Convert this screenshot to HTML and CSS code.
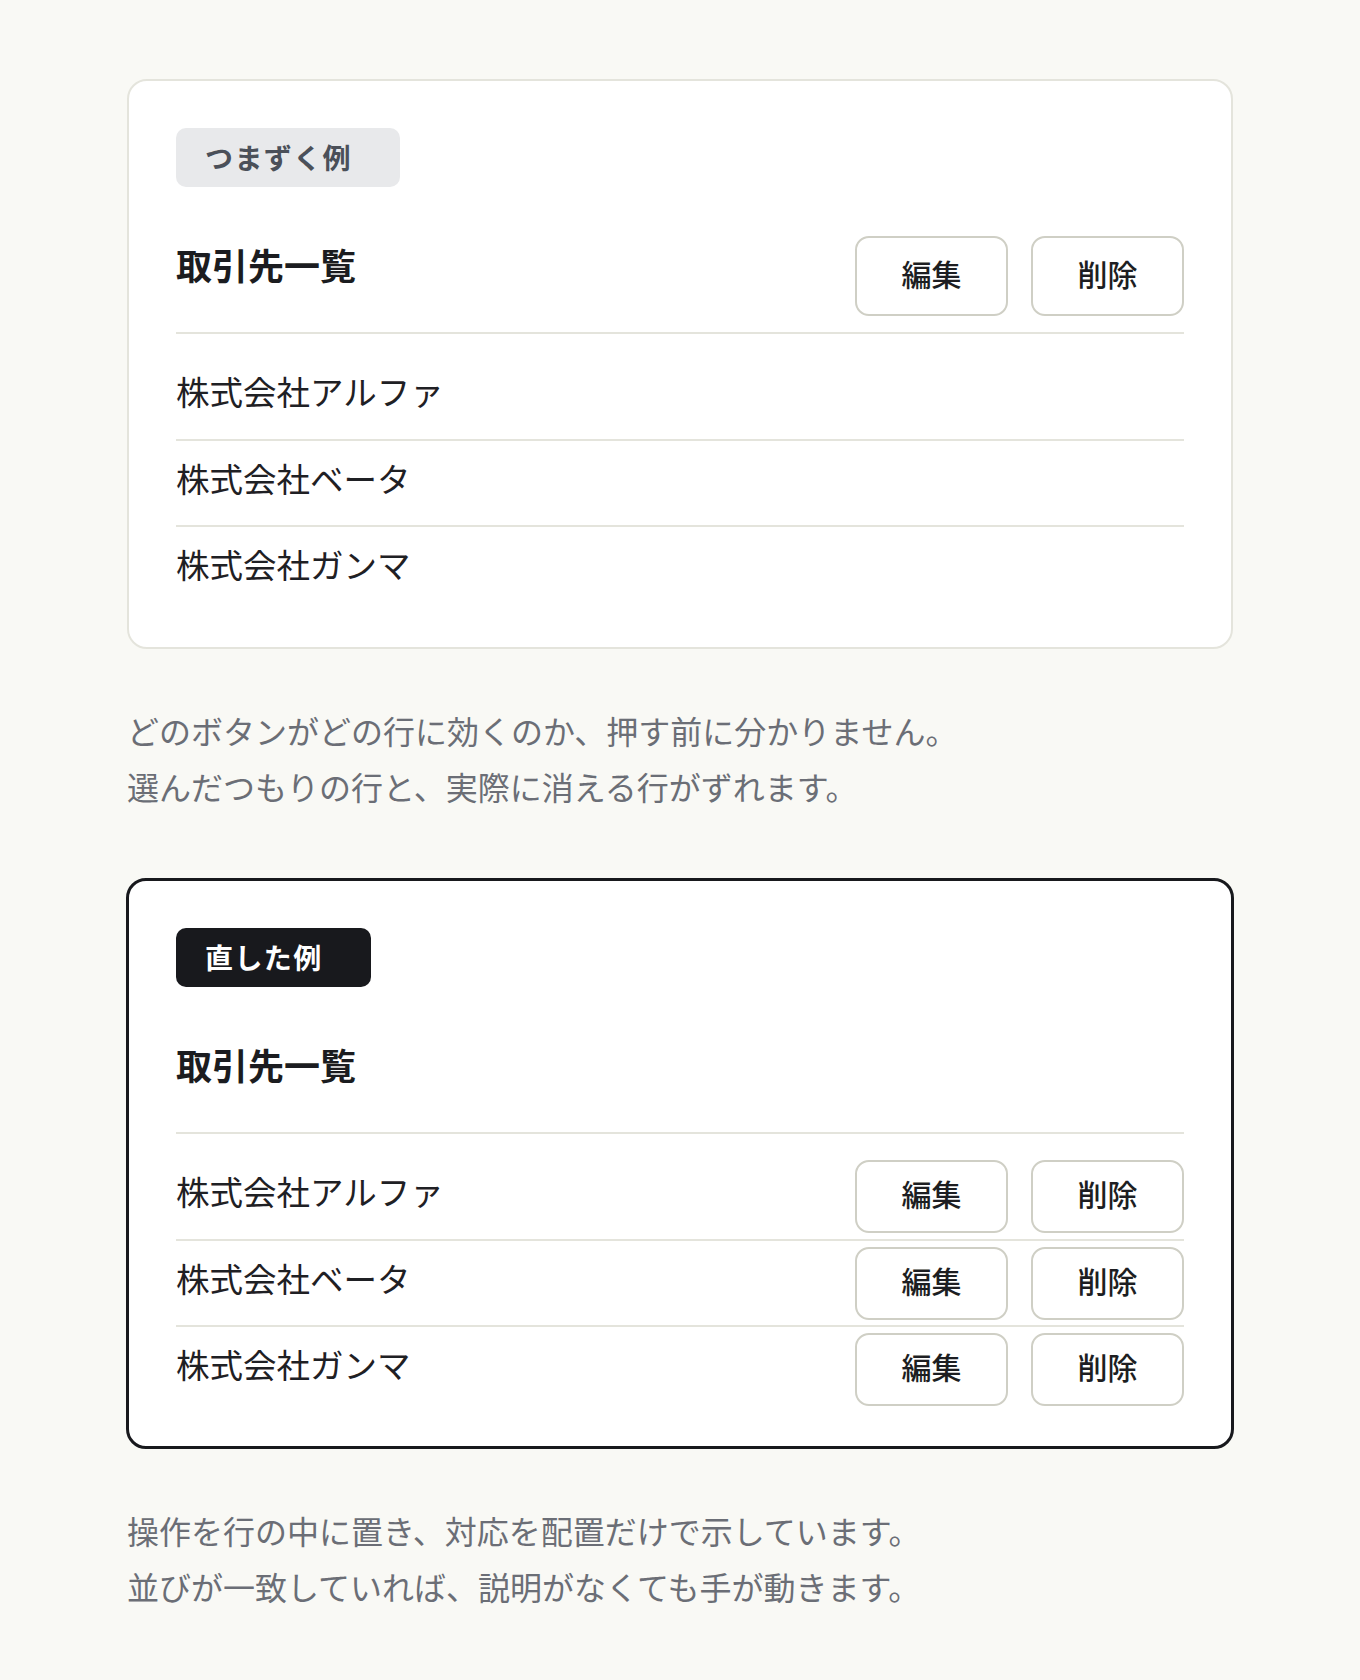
FILE: index.html
```html
<!DOCTYPE html>
<html lang="ja">
<head>
<meta charset="utf-8">
<title>取引先一覧 — ボタンの置き場所</title>
<link rel="stylesheet" href="styles.css">
</head>
<body>
<main class="page">

  <section class="card">
    <span class="badge badge-muted">つまずく例</span>
    <header class="list-head">
      <h2 class="list-title">取引先一覧</h2>
      <div class="actions">
        <button class="btn btn-tall" type="button">編集</button>
        <button class="btn btn-tall" type="button">削除</button>
      </div>
    </header>
    <ul class="rows">
      <li class="row"><span class="row-name">株式会社アルファ</span></li>
      <li class="row"><span class="row-name">株式会社ベータ</span></li>
      <li class="row"><span class="row-name">株式会社ガンマ</span></li>
    </ul>
  </section>

  <p class="note">どのボタンがどの行に効くのか、押す前に分かりません。<br>選んだつもりの行と、実際に消える行がずれます。</p>

  <section class="card card-strong">
    <span class="badge badge-dark">直した例</span>
    <header class="list-head">
      <h2 class="list-title">取引先一覧</h2>
    </header>
    <ul class="rows">
      <li class="row">
        <span class="row-name">株式会社アルファ</span>
        <div class="actions">
          <button class="btn" type="button">編集</button>
          <button class="btn" type="button">削除</button>
        </div>
      </li>
      <li class="row">
        <span class="row-name">株式会社ベータ</span>
        <div class="actions">
          <button class="btn" type="button">編集</button>
          <button class="btn" type="button">削除</button>
        </div>
      </li>
      <li class="row">
        <span class="row-name">株式会社ガンマ</span>
        <div class="actions">
          <button class="btn" type="button">編集</button>
          <button class="btn" type="button">削除</button>
        </div>
      </li>
    </ul>
  </section>

  <p class="note note-last">操作を行の中に置き、対応を配置だけで示しています。<br>並びが一致していれば、説明がなくても手が動きます。</p>

</main>
</body>
</html>
```

FILE: styles.css
```css
* {
  box-sizing: border-box;
}

body {
  margin: 0;
  background: #f9f9f5;
  color: #1b1c20;
  font-family: "Noto Sans CJK JP", "Noto Sans", sans-serif;
}

.page {
  width: 1106px;
  margin: 0 auto;
  padding: 79px 0 40px;
}

/* card shell */
.card {
  background: #ffffff;
  border: 2px solid #e4e4dc;
  border-radius: 20px;
  padding: 47px 47px 36px;
}

.card-strong {
  margin: 0 -1px;
  border: 3px solid #18191d;
  padding-bottom: 35px;
}

/* label chip */
.badge {
  display: inline-block;
  height: 59px;
  line-height: 59px;
  padding: 0 48px 0 29px;
  border-radius: 10px;
  font-size: 28px;
  font-weight: 700;
  letter-spacing: 0.05em;
}

.badge-muted {
  background: #e8e9eb;
  color: #4b5059;
}

.badge-dark {
  background: #18191d;
  color: #ffffff;
}

/* list header: same height whether or not it carries buttons */
.list-head {
  display: flex;
  align-items: center;
  justify-content: space-between;
  min-height: 98px;
  margin-top: 49px;
  padding-bottom: 16px;
  border-bottom: 2px solid #e4e4dc;
}

.list-title {
  margin: 0;
  padding-bottom: 24px;
  font-size: 36px;
  font-weight: 700;
  line-height: 1.4;
  color: #1b1c20;
}

.actions {
  display: flex;
  gap: 23px;
}

.btn {
  width: 153px;
  height: 73px;
  padding: 0 0 6px;
  background: #ffffff;
  border: 2px solid #cfcfc5;
  border-radius: 14px;
  font-family: inherit;
  font-size: 30px;
  font-weight: 500;
  color: #1d1e22;
}

.btn-tall {
  height: 80px;
}

/* rows */
.rows {
  list-style: none;
  margin: 0;
  padding: 19px 0 0;
}

.row {
  display: flex;
  align-items: center;
  justify-content: space-between;
  min-height: 86px;
}

.row + .row {
  border-top: 2px solid #e4e4dc;
}

.row-name {
  padding-bottom: 10px;
  font-size: 33.5px;
  line-height: 1.4;
  color: #1f2024;
}

/* explanatory notes */
.note {
  margin: 53px 0 64px;
  font-size: 32px;
  line-height: 56px;
  color: #6b6e76;
}

.note-last {
  margin: 53px 0 0;
}
```
